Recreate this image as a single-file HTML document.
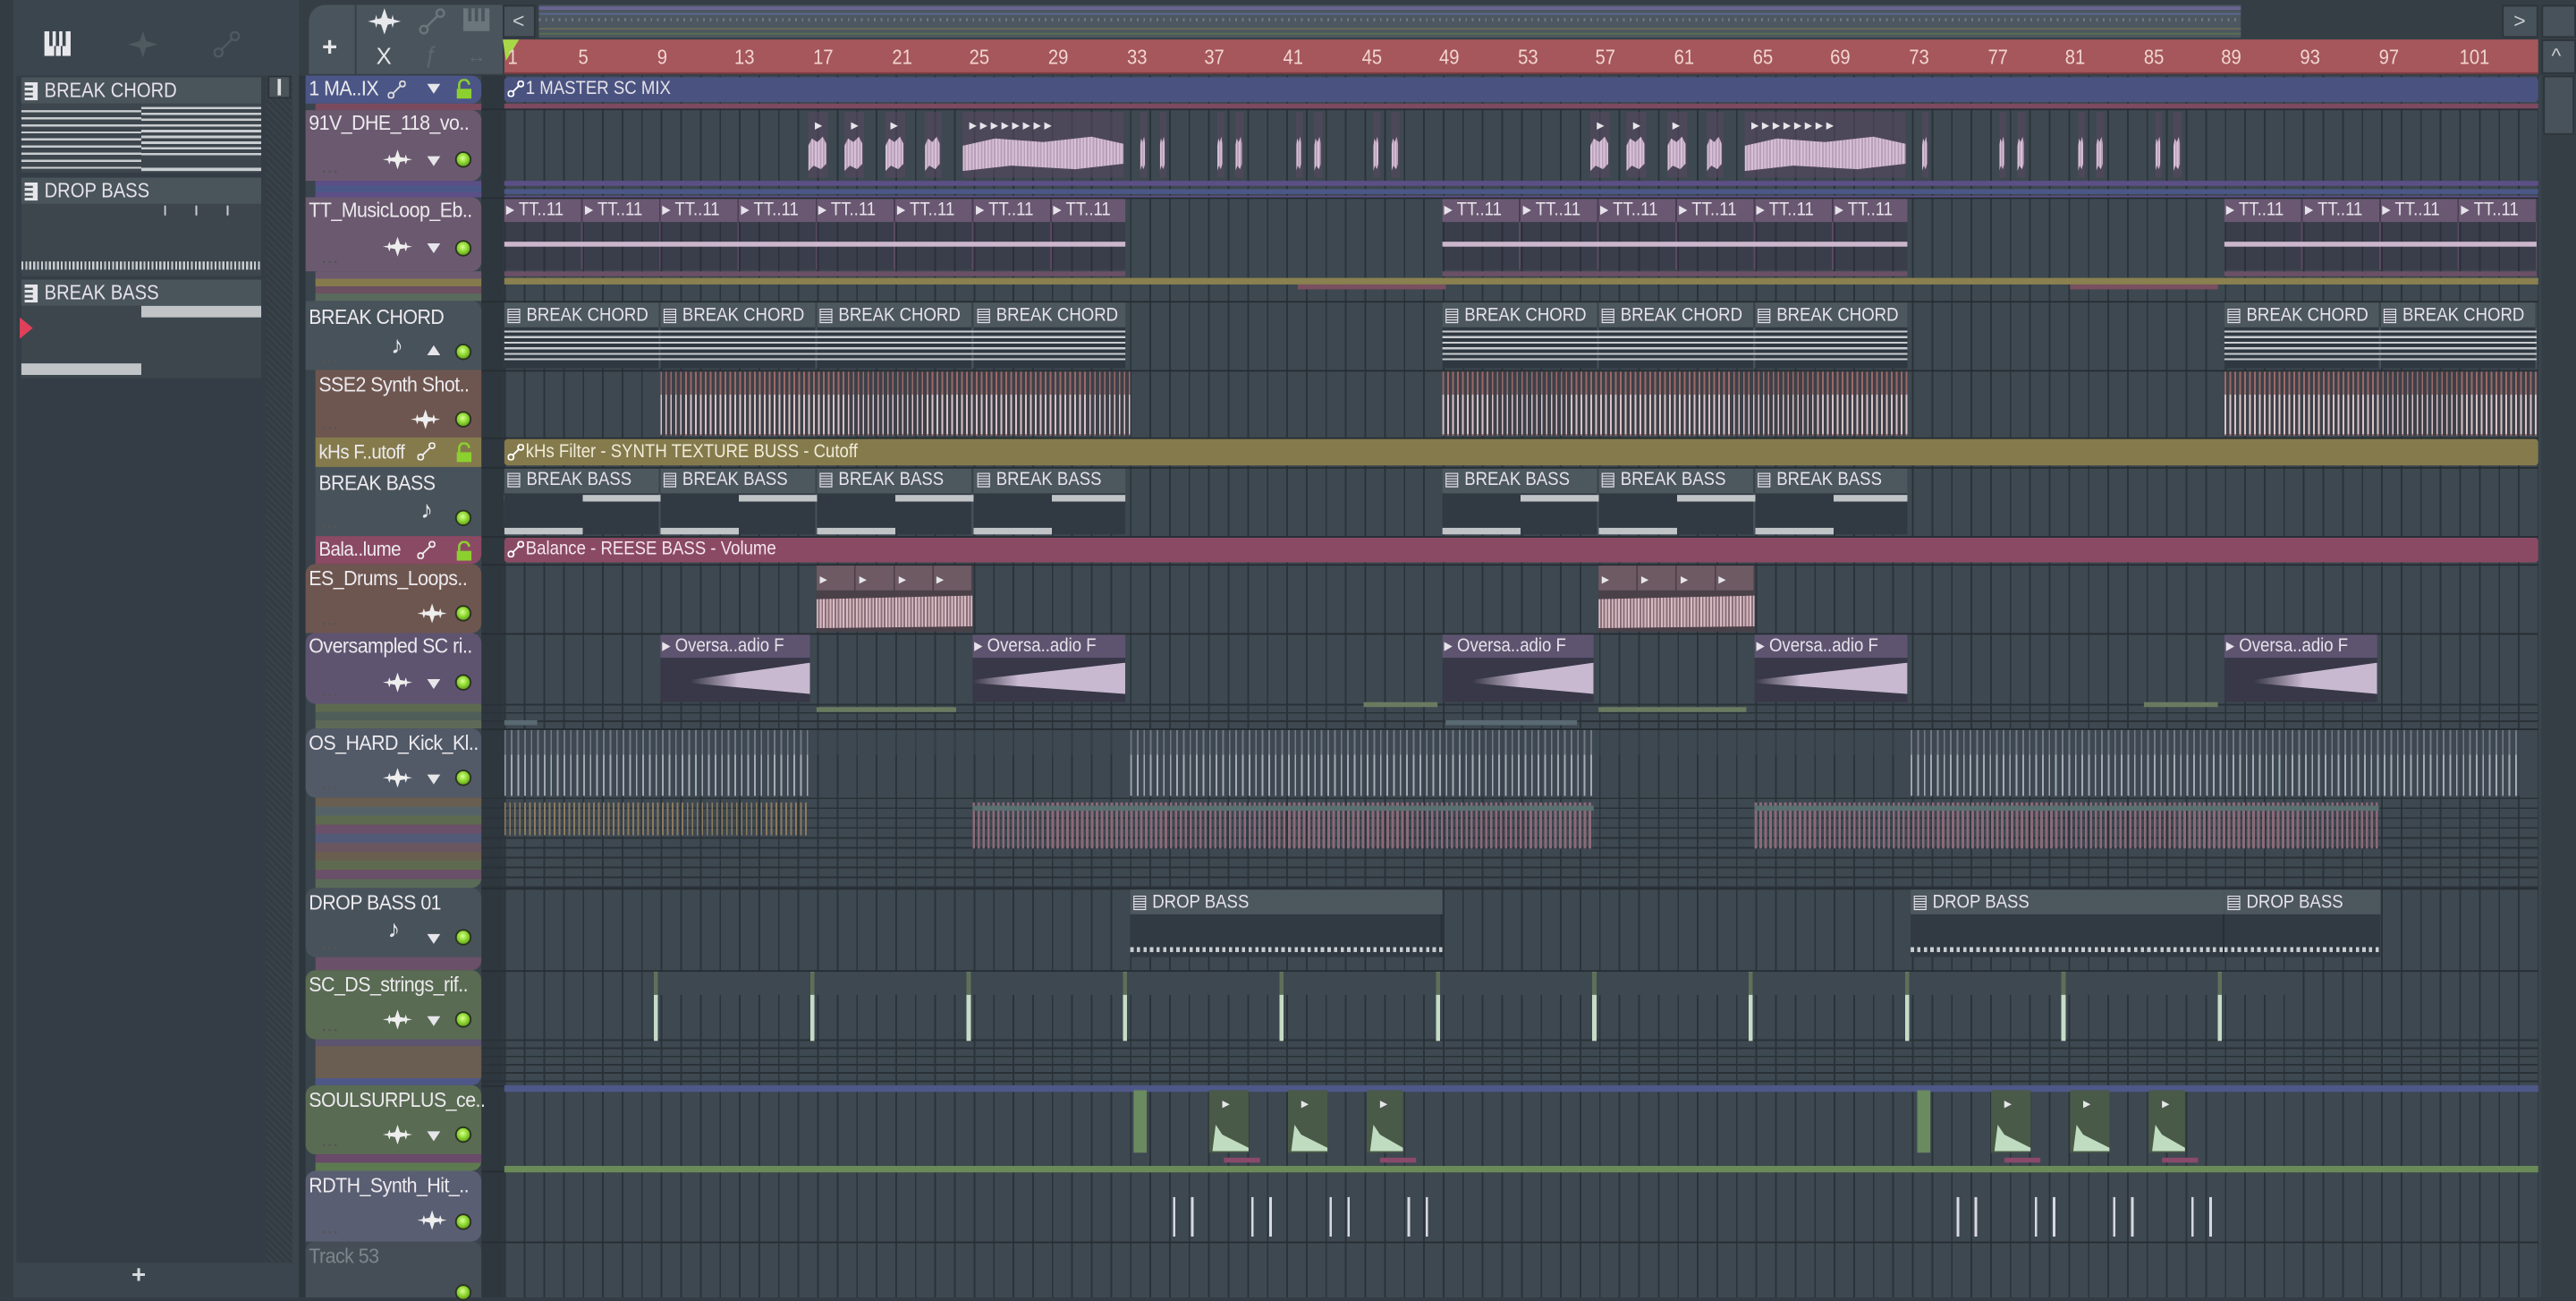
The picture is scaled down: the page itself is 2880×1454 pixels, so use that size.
<!DOCTYPE html>
<html><head><meta charset="utf-8"><style>
*{margin:0;padding:0;box-sizing:border-box}
html,body{width:2880px;height:1450px;overflow:hidden;background:#343d45}
#w{position:absolute;left:0;top:0;width:1568px;height:789px;transform:scale(1.83673,1.83777);transform-origin:0 0;font-family:"Liberation Sans",sans-serif;background:#3a444c}
.a{position:absolute}
.t{position:absolute;white-space:nowrap;color:#e6e6ea;font-size:12.5px;letter-spacing:-0.4px;line-height:14px}
.c{position:absolute;white-space:nowrap;color:#e6e2ea;font-size:11.5px;line-height:14px;transform:scaleX(.88);transform-origin:0 0}
.hd{position:absolute;left:186px;width:107px;border-radius:0 6px 6px 0}
.nm{position:absolute;left:2px;top:1px;white-space:nowrap;color:#eceaee;font-size:12.5px;letter-spacing:-0.3px;transform:scaleX(.93);transform-origin:0 0}
.dots{position:absolute;left:10px;bottom:3px;color:#555;font-size:9px;letter-spacing:1px;font-weight:bold}
.led{position:absolute;left:91px;width:10px;height:10px;border-radius:50%;background:radial-gradient(circle at 45% 40%,#d8ff90 0,#8cd630 45%,#4a7a10 100%);border:1px solid #2a3320}
.tri{position:absolute;left:74px;width:0;height:0;border-left:4px solid transparent;border-right:4px solid transparent;border-top:6px solid #e6e6ea}
.wv{position:absolute;left:47px;width:18px;height:12px}
.band{position:absolute;left:307px;width:1238px}
.vc{position:absolute;top:68px;height:40px;background:rgba(90,72,96,.55)}
.vw{position:absolute;top:82px;height:22px;background:repeating-linear-gradient(90deg,#d8c0d8 0 1px,#b8a0b8 1px 2px);clip-path:polygon(0 30%,20% 10%,50% 20%,80% 5%,100% 25%,100% 80%,70% 95%,30% 85%,0 100%)}
</style></head><body><div id="w">

<!-- LEFT PICKER -->
<div class="a" style="left:0;top:0;width:182px;height:789px;background:#3b454d"></div>
<div class="a" style="left:0;top:0;width:8px;height:789px;background:#333c43"></div>
<svg class="a" style="left:27px;top:19px" width="16" height="15"><rect x="0" y="0" width="16" height="15" fill="#e8e8ec"/><rect x="3" y="0" width="2" height="9" fill="#3b454d"/><rect x="7" y="0" width="2" height="9" fill="#3b454d"/><rect x="11" y="0" width="2" height="9" fill="#3b454d"/><rect x="6" y="9" width="1" height="6" fill="#3b454d"/><rect x="10" y="9" width="1" height="6" fill="#3b454d"/></svg>
<svg class="a" style="left:78px;top:19px" width="18" height="16"><path d="M9 0 L11 6 L18 8 L11 10 L9 16 L7 10 L0 8 L7 6Z" fill="#4f5960"/></svg>
<svg class="a" style="left:130px;top:19px" width="16" height="16"><circle cx="3" cy="13" r="2.5" fill="none" stroke="#4f5960" stroke-width="1.3"/><circle cx="13" cy="3" r="2.5" fill="none" stroke="#4f5960" stroke-width="1.3"/><line x1="5" y1="11" x2="11" y2="5" stroke="#4f5960" stroke-width="1.3"/></svg>
<div class="a" style="left:10px;top:46px;width:168px;height:722px;background:#343d45;border-right:1px solid #2c343a"></div>
<div class="a" style="left:162px;top:46px;width:16px;height:722px;background:repeating-linear-gradient(45deg,#3a434a 0 1px,#343c43 1px 3px)"></div>
<div class="a" style="left:163px;top:46px;width:14px;height:14px;background:#4a545b;border:1px solid #2b3338"></div>
<div class="a" style="left:169px;top:48px;width:2px;height:10px;background:#dcdcdc"></div>
<div class="a" style="left:13px;top:47px;width:146px;height:16px;background:#4a545b"></div>
<svg class="a" style="left:15px;top:50px" width="8" height="11"><rect width="8" height="11" fill="#e6e6ea"/><rect x="0" y="2" width="5" height="1.3" fill="#4a545b"/><rect x="0" y="5" width="5" height="1.3" fill="#4a545b"/><rect x="0" y="8" width="5" height="1.3" fill="#4a545b"/></svg>
<div class="c" style="left:27px;top:48px;font-size:12.5px">BREAK CHORD</div>
<div class="a" style="left:13px;top:63px;width:146px;height:42px;background:#3d464d"></div>
<div class="a" style="left:13px;top:67px;width:73px;height:38px;background:repeating-linear-gradient(180deg,#c9cdd0 0 1.3px,transparent 1.3px 4.3px)"></div>
<div class="a" style="left:86px;top:65px;width:73px;height:30px;background:repeating-linear-gradient(180deg,#c9cdd0 0 1.5px,transparent 1.5px 3.5px)"></div>
<div class="a" style="left:86px;top:102px;width:73px;height:2px;background:#c9cdd0"></div>
<div class="a" style="left:13px;top:108px;width:146px;height:16px;background:#4a545b"></div>
<svg class="a" style="left:15px;top:111px" width="8" height="11"><rect width="8" height="11" fill="#e6e6ea"/><rect x="0" y="2" width="5" height="1.3" fill="#4a545b"/><rect x="0" y="5" width="5" height="1.3" fill="#4a545b"/><rect x="0" y="8" width="5" height="1.3" fill="#4a545b"/></svg>
<div class="c" style="left:27px;top:109px;font-size:12.5px">DROP BASS</div>
<div class="a" style="left:13px;top:124px;width:146px;height:44px;background:#3d464d"></div>
<div class="a" style="left:100px;top:125px;width:56px;height:6px;background:repeating-linear-gradient(90deg,#c9cdd0 0 1px,transparent 1px 19px)"></div>
<div class="a" style="left:13px;top:159px;width:146px;height:5px;background:repeating-linear-gradient(90deg,#c9cdd0 0 1.2px,transparent 1.2px 2.4px)"></div>
<div class="a" style="left:13px;top:170px;width:146px;height:16px;background:#4a545b"></div>
<svg class="a" style="left:15px;top:173px" width="8" height="11"><rect width="8" height="11" fill="#e6e6ea"/><rect x="0" y="2" width="5" height="1.3" fill="#4a545b"/><rect x="0" y="5" width="5" height="1.3" fill="#4a545b"/><rect x="0" y="8" width="5" height="1.3" fill="#4a545b"/></svg>
<div class="c" style="left:27px;top:171px;font-size:12.5px">BREAK BASS</div>
<div class="a" style="left:13px;top:186px;width:146px;height:44px;background:#3d464d"></div>
<div class="a" style="left:86px;top:186px;width:73px;height:7px;background:#c0c4c7"></div>
<div class="a" style="left:13px;top:221px;width:73px;height:7px;background:#c0c4c7"></div>
<svg class="a" style="left:12px;top:193px" width="8" height="13"><path d="M0 0 L8 6.5 L0 13Z" fill="#e0405a"/></svg>
<div class="a" style="left:10px;top:768px;width:168px;height:21px;background:#3b454d"></div>
<div class="t" style="left:80px;top:769px;font-size:15px;font-weight:bold;color:#d8dadc">+</div>

<!-- TOP TOOLBAR -->
<div class="a" style="left:182px;top:0;width:1386px;height:46px;background:#353e45"></div>
<div class="a" style="left:188px;top:3px;width:118px;height:42px;background:#4a545c;border-radius:10px 0 0 0"></div>
<div class="a" style="left:216px;top:3px;width:1px;height:42px;background:#353e45"></div>
<div class="t" style="left:196px;top:23px;font-size:16px;font-weight:bold;color:#e6e6ea">+</div>
<svg class="a" style="left:224px;top:5px" width="20" height="16"><path d="M10 0 L12 6 L20 8 L12 10 L10 16 L8 10 L0 8 L8 6Z M5 4 L6 8 L5 12 L4 8Z M15 4 L16 8 L15 12 L14 8Z" fill="#e8e8ec"/></svg>
<svg class="a" style="left:255px;top:5px" width="16" height="16"><circle cx="3" cy="13" r="2.3" fill="none" stroke="#6b757c" stroke-width="1.3"/><circle cx="13" cy="3" r="2.3" fill="none" stroke="#6b757c" stroke-width="1.3"/><line x1="5" y1="11" x2="11" y2="5" stroke="#6b757c" stroke-width="1.3"/></svg>
<svg class="a" style="left:282px;top:5px" width="16" height="14"><rect width="16" height="14" fill="#6b757c"/><rect x="3" y="0" width="2" height="8" fill="#4a545c"/><rect x="7" y="0" width="2" height="8" fill="#4a545c"/><rect x="11" y="0" width="2" height="8" fill="#4a545c"/></svg>
<div class="t" style="left:229px;top:27px;font-size:14px;color:#e6e6ea">X</div>
<div class="t" style="left:258px;top:26px;font-size:14px;font-style:italic;color:#5c666d">ƒ</div>
<div class="t" style="left:284px;top:27px;font-size:12px;color:#5c666d">↔</div>
<div class="a" style="left:306px;top:3px;width:20px;height:20px;background:#48525a;border:1px solid #2c343a"></div>
<div class="t" style="left:312px;top:6px;color:#c8ccd0">&lt;</div>
<!-- overview -->
<div class="a" style="left:328px;top:3px;width:1036px;height:20px;background:#4c5760"></div>
<div class="a" style="left:328px;top:4px;width:1036px;height:2px;background:#6a6494"></div>
<div class="a" style="left:328px;top:8px;width:1036px;height:1px;background:#5c6890"></div>
<div class="a" style="left:328px;top:11px;width:1036px;height:2px;background:repeating-linear-gradient(90deg,#8a8aa0 0 1px,transparent 1px 4px);opacity:.6"></div>
<div class="a" style="left:328px;top:17px;width:1036px;height:1px;background:#6a6a58"></div>
<div class="a" style="left:328px;top:20px;width:1036px;height:1px;background:#5a7050"></div>
<div class="a" style="left:1523px;top:3px;width:22px;height:20px;background:#48525a;border:1px solid #2c343a"></div>
<div class="t" style="left:1530px;top:6px;color:#c8ccd0">&gt;</div>
<div class="a" style="left:1547px;top:3px;width:21px;height:20px;background:#48525a;border:1px solid #2c343a"></div>

<!-- RULER -->
<div class="a" style="left:307px;top:24px;width:1238px;height:21px;background:#a5575b;border-bottom:1px solid #7a3a40"></div>
<svg class="a" style="left:306px;top:24px" width="10" height="14"><path d="M0 0 L10 0 L2 13Z" fill="#a8d848"/></svg>
<div class="c" style="left:309px;top:28px;color:#f2d4d0;font-size:12.5px">1</div>
<div class="c" style="left:352px;top:28px;color:#f2d4d0;font-size:12.5px">5</div>
<div class="c" style="left:400px;top:28px;color:#f2d4d0;font-size:12.5px">9</div>
<div class="c" style="left:447px;top:28px;color:#f2d4d0;font-size:12.5px">13</div>
<div class="c" style="left:495px;top:28px;color:#f2d4d0;font-size:12.5px">17</div>
<div class="c" style="left:543px;top:28px;color:#f2d4d0;font-size:12.5px">21</div>
<div class="c" style="left:590px;top:28px;color:#f2d4d0;font-size:12.5px">25</div>
<div class="c" style="left:638px;top:28px;color:#f2d4d0;font-size:12.5px">29</div>
<div class="c" style="left:686px;top:28px;color:#f2d4d0;font-size:12.5px">33</div>
<div class="c" style="left:733px;top:28px;color:#f2d4d0;font-size:12.5px">37</div>
<div class="c" style="left:781px;top:28px;color:#f2d4d0;font-size:12.5px">41</div>
<div class="c" style="left:829px;top:28px;color:#f2d4d0;font-size:12.5px">45</div>
<div class="c" style="left:876px;top:28px;color:#f2d4d0;font-size:12.5px">49</div>
<div class="c" style="left:924px;top:28px;color:#f2d4d0;font-size:12.5px">53</div>
<div class="c" style="left:971px;top:28px;color:#f2d4d0;font-size:12.5px">57</div>
<div class="c" style="left:1019px;top:28px;color:#f2d4d0;font-size:12.5px">61</div>
<div class="c" style="left:1067px;top:28px;color:#f2d4d0;font-size:12.5px">65</div>
<div class="c" style="left:1114px;top:28px;color:#f2d4d0;font-size:12.5px">69</div>
<div class="c" style="left:1162px;top:28px;color:#f2d4d0;font-size:12.5px">73</div>
<div class="c" style="left:1210px;top:28px;color:#f2d4d0;font-size:12.5px">77</div>
<div class="c" style="left:1257px;top:28px;color:#f2d4d0;font-size:12.5px">81</div>
<div class="c" style="left:1305px;top:28px;color:#f2d4d0;font-size:12.5px">85</div>
<div class="c" style="left:1352px;top:28px;color:#f2d4d0;font-size:12.5px">89</div>
<div class="c" style="left:1400px;top:28px;color:#f2d4d0;font-size:12.5px">93</div>
<div class="c" style="left:1448px;top:28px;color:#f2d4d0;font-size:12.5px">97</div>
<div class="c" style="left:1497px;top:28px;color:#f2d4d0;font-size:12.5px">101</div>
<!-- right scrollbar -->
<div class="a" style="left:1547px;top:24px;width:21px;height:765px;background:#353e45"></div>
<div class="a" style="left:1547px;top:24px;width:21px;height:21px;background:#48525a;border:1px solid #2c343a"></div>
<div class="t" style="left:1553px;top:27px;color:#c8ccd0">^</div>
<div class="a" style="left:1548px;top:46px;width:19px;height:36px;background:#48525a;border:1px solid #2c343a"></div>

<!-- GRID -->
<div class="a" style="left:293px;top:46px;width:14px;height:743px;background:#2f373e"></div>
<div class="a" style="left:307px;top:46px;width:1238px;height:743px;background-color:#3e4851;background-image:repeating-linear-gradient(90deg,#2b333a 0 1px,transparent 1px 11.9px)"></div>
<div class="a" style="left:293px;top:0;width:1252px;height:789px;background:
linear-gradient(#262d33,#262d33) 0 66px/100% 1px no-repeat,
linear-gradient(#262d33,#262d33) 0 120px/100% 1px no-repeat,
linear-gradient(#262d33,#262d33) 0 183px/100% 1px no-repeat,
linear-gradient(#262d33,#262d33) 0 225px/100% 1px no-repeat,
linear-gradient(#262d33,#262d33) 0 266px/100% 1px no-repeat,
linear-gradient(#262d33,#262d33) 0 284px/100% 1px no-repeat,
linear-gradient(#262d33,#262d33) 0 326px/100% 1px no-repeat,
linear-gradient(#262d33,#262d33) 0 343px/100% 1px no-repeat,
linear-gradient(#262d33,#262d33) 0 385px/100% 1px no-repeat,
linear-gradient(#262d33,#262d33) 0 443px/100% 1px no-repeat,
linear-gradient(#262d33,#262d33) 0 540px/100% 1px no-repeat,
linear-gradient(#262d33,#262d33) 0 590px/100% 1px no-repeat,
linear-gradient(#262d33,#262d33) 0 660px/100% 1px no-repeat,
linear-gradient(#262d33,#262d33) 0 712px/100% 1px no-repeat,
linear-gradient(#262d33,#262d33) 0 755px/100% 1px no-repeat"></div>
<div class="a" style="left:293px;top:485px;width:1252px;height:55px;background:repeating-linear-gradient(180deg,#2a3238 0 1px,transparent 1px 6px)"></div>
<div class="a" style="left:293px;top:632px;width:1252px;height:28px;background:repeating-linear-gradient(180deg,#2a3238 0 1px,transparent 1px 5px)"></div>
<div class="a" style="left:293px;top:428px;width:1252px;height:15px;background:repeating-linear-gradient(180deg,#2a3238 0 1px,transparent 1px 5px)"></div>

<!-- automation / bands -->
<div class="band" style="top:47px;height:15px;background:#4a5380;border-radius:2px"></div>
<svg class="a" style="left:309px;top:49px" width="10" height="10"><circle cx="2" cy="8" r="1.7" fill="none" stroke="#fff" stroke-width="1"/><circle cx="8" cy="2" r="1.7" fill="none" stroke="#fff" stroke-width="1"/><line x1="3.2" y1="6.8" x2="6.8" y2="3.2" stroke="#fff"/></svg>
<div class="c" style="left:320px;top:47px">1 MASTER SC MIX</div>
<div class="band" style="top:63px;height:3px;background:#7d4a60"></div>
<div class="band" style="top:110px;height:3px;background:#5c4f86"></div>
<div class="band" style="top:115px;height:3px;background:#4b5887"></div>
<div class="band" style="top:119px;height:1px;background:#5c4f86"></div>
<div class="band" style="top:169px;height:4px;background:#8a8050"></div>
<div class="a" style="left:307px;top:165px;width:378px;height:3px;background:#6a5066"></div>
<div class="a" style="left:878px;top:165px;width:283px;height:3px;background:#6a5066"></div>
<div class="a" style="left:1354px;top:165px;width:190px;height:3px;background:#6a5066"></div>
<div class="a" style="left:790px;top:173px;width:90px;height:3px;background:#7a5060"></div>
<div class="a" style="left:1260px;top:173px;width:90px;height:3px;background:#7a5060"></div>
<div class="band" style="top:267px;height:16px;background:#857a4c;border-radius:2px"></div>
<svg class="a" style="left:309px;top:270px" width="10" height="10"><circle cx="2" cy="8" r="1.7" fill="none" stroke="#fff" stroke-width="1"/><circle cx="8" cy="2" r="1.7" fill="none" stroke="#fff" stroke-width="1"/><line x1="3.2" y1="6.8" x2="6.8" y2="3.2" stroke="#fff"/></svg>
<div class="c" style="left:320px;top:268px;color:#f0ecd8">kHs Filter - SYNTH TEXTURE BUSS - Cutoff</div>
<div class="band" style="top:327px;height:15px;background:#8b4a64;border-radius:2px"></div>
<svg class="a" style="left:309px;top:329px" width="10" height="10"><circle cx="2" cy="8" r="1.7" fill="none" stroke="#fff" stroke-width="1"/><circle cx="8" cy="2" r="1.7" fill="none" stroke="#fff" stroke-width="1"/><line x1="3.2" y1="6.8" x2="6.8" y2="3.2" stroke="#fff"/></svg>
<div class="c" style="left:320px;top:327px;color:#f4e6ec">Balance - REESE BASS - Volume</div>
<div class="band" style="top:660px;height:4px;background:#4e5888"></div>
<div class="band" style="top:709px;height:4px;background:#6a8a58"></div>

<!-- 91V vocal clips -->
<div class="vc" style="left:492px;width:12px"></div><div class="vw" style="left:492px;width:11px"></div>
<div class="vc" style="left:514px;width:12px"></div><div class="vw" style="left:514px;width:11px"></div>
<div class="vc" style="left:539px;width:12px"></div><div class="vw" style="left:539px;width:11px"></div>
<div class="vc" style="left:563px;width:10px"></div><div class="vw" style="left:563px;width:9px"></div>
<div class="vc" style="left:586px;width:98px"></div><div class="vw" style="left:586px;width:98px"></div>
<div class="vc" style="left:694px;width:4px"></div><div class="vw" style="left:694px;width:3px"></div>
<div class="vc" style="left:706px;width:4px"></div><div class="vw" style="left:706px;width:3px"></div>
<div class="vc" style="left:741px;width:4px"></div><div class="vw" style="left:741px;width:3px"></div>
<div class="vc" style="left:752px;width:5px"></div><div class="vw" style="left:752px;width:4px"></div>
<div class="vc" style="left:789px;width:4px"></div><div class="vw" style="left:789px;width:3px"></div>
<div class="vc" style="left:800px;width:5px"></div><div class="vw" style="left:800px;width:4px"></div>
<div class="vc" style="left:836px;width:4px"></div><div class="vw" style="left:836px;width:3px"></div>
<div class="vc" style="left:847px;width:5px"></div><div class="vw" style="left:847px;width:4px"></div>
<div class="vc" style="left:968px;width:12px"></div><div class="vw" style="left:968px;width:11px"></div>
<div class="vc" style="left:990px;width:12px"></div><div class="vw" style="left:990px;width:11px"></div>
<div class="vc" style="left:1015px;width:12px"></div><div class="vw" style="left:1015px;width:11px"></div>
<div class="vc" style="left:1039px;width:10px"></div><div class="vw" style="left:1039px;width:9px"></div>
<div class="vc" style="left:1062px;width:98px"></div><div class="vw" style="left:1062px;width:98px"></div>
<div class="vc" style="left:1170px;width:4px"></div><div class="vw" style="left:1170px;width:3px"></div>
<div class="vc" style="left:1217px;width:4px"></div><div class="vw" style="left:1217px;width:3px"></div>
<div class="vc" style="left:1228px;width:5px"></div><div class="vw" style="left:1228px;width:4px"></div>
<div class="vc" style="left:1265px;width:4px"></div><div class="vw" style="left:1265px;width:3px"></div>
<div class="vc" style="left:1276px;width:5px"></div><div class="vw" style="left:1276px;width:4px"></div>
<div class="vc" style="left:1312px;width:4px"></div><div class="vw" style="left:1312px;width:3px"></div>
<div class="vc" style="left:1323px;width:5px"></div><div class="vw" style="left:1323px;width:4px"></div>
<div class="t" style="left:496px;top:69px;font-size:9px">▸</div><div class="t" style="left:518px;top:69px;font-size:9px">▸</div><div class="t" style="left:542px;top:69px;font-size:9px">▸</div>
<div class="t" style="left:590px;top:69px;font-size:9px;letter-spacing:2px">▸▸▸▸▸▸▸▸</div>
<div class="t" style="left:972px;top:69px;font-size:9px">▸</div><div class="t" style="left:994px;top:69px;font-size:9px">▸</div><div class="t" style="left:1018px;top:69px;font-size:9px">▸</div>
<div class="t" style="left:1066px;top:69px;font-size:9px;letter-spacing:2px">▸▸▸▸▸▸▸▸</div>

<!-- TT clips -->
<div class="a" style="left:307px;top:121px;width:378px;height:43px;background:repeating-linear-gradient(90deg,rgba(50,40,60,.35) 0 46.6px,#5a4a62 46.6px 47.6px)"></div>
<div class="a" style="left:307px;top:121px;width:378px;height:14px;background:repeating-linear-gradient(90deg,#6a5872 0 46.6px,#4a3e52 46.6px 47.6px)"></div>
<div class="a" style="left:307px;top:147px;width:378px;height:3px;background:#cbb6cc"></div>
<div class="a" style="left:878px;top:121px;width:283px;height:43px;background:repeating-linear-gradient(90deg,rgba(50,40,60,.35) 0 46.6px,#5a4a62 46.6px 47.6px)"></div>
<div class="a" style="left:878px;top:121px;width:283px;height:14px;background:repeating-linear-gradient(90deg,#6a5872 0 46.6px,#4a3e52 46.6px 47.6px)"></div>
<div class="a" style="left:878px;top:147px;width:283px;height:3px;background:#cbb6cc"></div>
<div class="a" style="left:1354px;top:121px;width:190px;height:43px;background:repeating-linear-gradient(90deg,rgba(50,40,60,.35) 0 46.6px,#5a4a62 46.6px 47.6px)"></div>
<div class="a" style="left:1354px;top:121px;width:190px;height:14px;background:repeating-linear-gradient(90deg,#6a5872 0 46.6px,#4a3e52 46.6px 47.6px)"></div>
<div class="a" style="left:1354px;top:147px;width:190px;height:3px;background:#cbb6cc"></div>
<div class="c" style="left:308px;top:121px">▸ TT..11</div><div class="c" style="left:356px;top:121px">▸ TT..11</div><div class="c" style="left:403px;top:121px">▸ TT..11</div><div class="c" style="left:451px;top:121px">▸ TT..11</div><div class="c" style="left:498px;top:121px">▸ TT..11</div><div class="c" style="left:546px;top:121px">▸ TT..11</div><div class="c" style="left:594px;top:121px">▸ TT..11</div><div class="c" style="left:641px;top:121px">▸ TT..11</div>
<div class="c" style="left:879px;top:121px">▸ TT..11</div><div class="c" style="left:927px;top:121px">▸ TT..11</div><div class="c" style="left:974px;top:121px">▸ TT..11</div><div class="c" style="left:1022px;top:121px">▸ TT..11</div><div class="c" style="left:1069px;top:121px">▸ TT..11</div><div class="c" style="left:1117px;top:121px">▸ TT..11</div>
<div class="c" style="left:1355px;top:121px">▸ TT..11</div><div class="c" style="left:1403px;top:121px">▸ TT..11</div><div class="c" style="left:1450px;top:121px">▸ TT..11</div><div class="c" style="left:1498px;top:121px">▸ TT..11</div>

<!-- BREAK CHORD clips -->
<div class="a" style="left:307px;top:184px;width:378px;height:40px;background:repeating-linear-gradient(90deg,#2f3840 0 94px,#465058 94px 95.2px)"></div>
<div class="a" style="left:307px;top:184px;width:378px;height:15px;background:repeating-linear-gradient(90deg,#4d575e 0 94px,#3a434a 94px 95.2px)"></div>
<div class="a" style="left:307px;top:201px;width:378px;height:18px;background:repeating-linear-gradient(180deg,#c8ccd0 0 1.2px,transparent 1.2px 3.4px)"></div>
<div class="a" style="left:878px;top:184px;width:283px;height:40px;background:repeating-linear-gradient(90deg,#2f3840 0 94px,#465058 94px 95.2px)"></div>
<div class="a" style="left:878px;top:184px;width:283px;height:15px;background:repeating-linear-gradient(90deg,#4d575e 0 94px,#3a434a 94px 95.2px)"></div>
<div class="a" style="left:878px;top:201px;width:283px;height:18px;background:repeating-linear-gradient(180deg,#c8ccd0 0 1.2px,transparent 1.2px 3.4px)"></div>
<div class="a" style="left:1354px;top:184px;width:190px;height:40px;background:repeating-linear-gradient(90deg,#2f3840 0 94px,#465058 94px 95.2px)"></div>
<div class="a" style="left:1354px;top:184px;width:190px;height:15px;background:repeating-linear-gradient(90deg,#4d575e 0 94px,#3a434a 94px 95.2px)"></div>
<div class="a" style="left:1354px;top:201px;width:190px;height:18px;background:repeating-linear-gradient(180deg,#c8ccd0 0 1.2px,transparent 1.2px 3.4px)"></div>
<div class="c" style="left:308px;top:185px">▤ BREAK CHORD</div><div class="c" style="left:403px;top:185px">▤ BREAK CHORD</div><div class="c" style="left:498px;top:185px">▤ BREAK CHORD</div><div class="c" style="left:594px;top:185px">▤ BREAK CHORD</div>
<div class="c" style="left:879px;top:185px">▤ BREAK CHORD</div><div class="c" style="left:974px;top:185px">▤ BREAK CHORD</div><div class="c" style="left:1069px;top:185px">▤ BREAK CHORD</div>
<div class="c" style="left:1355px;top:185px">▤ BREAK CHORD</div><div class="c" style="left:1450px;top:185px">▤ BREAK CHORD</div>

<!-- SSE2 -->
<div class="a" style="left:402px;top:226px;width:286px;height:39px;background:repeating-linear-gradient(90deg,#9a6a68 0 1px,#3e4048 1px 3px)"></div>
<div class="a" style="left:402px;top:240px;width:286px;height:24px;background:repeating-linear-gradient(90deg,#d8c4c8 0 1px,transparent 1px 3px)"></div>
<div class="a" style="left:878px;top:226px;width:283px;height:39px;background:repeating-linear-gradient(90deg,#9a6a68 0 1px,#3e4048 1px 3px)"></div>
<div class="a" style="left:878px;top:240px;width:283px;height:24px;background:repeating-linear-gradient(90deg,#d8c4c8 0 1px,transparent 1px 3px)"></div>
<div class="a" style="left:1354px;top:226px;width:190px;height:39px;background:repeating-linear-gradient(90deg,#9a6a68 0 1px,#3e4048 1px 3px)"></div>
<div class="a" style="left:1354px;top:240px;width:190px;height:24px;background:repeating-linear-gradient(90deg,#d8c4c8 0 1px,transparent 1px 3px)"></div>

<!-- BREAK BASS -->
<div class="a" style="left:307px;top:285px;width:378px;height:40px;background:repeating-linear-gradient(90deg,#313a42 0 94px,#465058 94px 95.2px)"></div>
<div class="a" style="left:307px;top:285px;width:378px;height:15px;background:repeating-linear-gradient(90deg,#4d575e 0 94px,#3a434a 94px 95.2px)"></div>
<div class="a" style="left:307px;top:301px;width:378px;height:4px;background:repeating-linear-gradient(90deg,transparent 0 47.6px,#c0c4c7 47.6px 95.2px)"></div>
<div class="a" style="left:307px;top:321px;width:378px;height:4px;background:repeating-linear-gradient(90deg,#c0c4c7 0 47.6px,transparent 47.6px 95.2px)"></div>
<div class="a" style="left:878px;top:285px;width:283px;height:40px;background:repeating-linear-gradient(90deg,#313a42 0 94px,#465058 94px 95.2px)"></div>
<div class="a" style="left:878px;top:285px;width:283px;height:15px;background:repeating-linear-gradient(90deg,#4d575e 0 94px,#3a434a 94px 95.2px)"></div>
<div class="a" style="left:878px;top:301px;width:283px;height:4px;background:repeating-linear-gradient(90deg,transparent 0 47.6px,#c0c4c7 47.6px 95.2px)"></div>
<div class="a" style="left:878px;top:321px;width:283px;height:4px;background:repeating-linear-gradient(90deg,#c0c4c7 0 47.6px,transparent 47.6px 95.2px)"></div>
<div class="c" style="left:308px;top:285px">▤ BREAK BASS</div><div class="c" style="left:403px;top:285px">▤ BREAK BASS</div><div class="c" style="left:498px;top:285px">▤ BREAK BASS</div><div class="c" style="left:594px;top:285px">▤ BREAK BASS</div>
<div class="c" style="left:879px;top:285px">▤ BREAK BASS</div><div class="c" style="left:974px;top:285px">▤ BREAK BASS</div><div class="c" style="left:1069px;top:285px">▤ BREAK BASS</div>

<!-- ES Drums -->
<div class="a" style="left:497px;top:344px;width:95px;height:40px;background:#4a4048"></div>
<div class="a" style="left:497px;top:344px;width:95px;height:15px;background:repeating-linear-gradient(90deg,#6e5a62 0 23px,#4a3e46 23px 23.8px)"></div>
<div class="a" style="left:497px;top:360px;width:95px;height:22px;background:repeating-linear-gradient(90deg,#d8bcc4 0 1px,#8a6e78 1px 2px);clip-path:polygon(0 20%,100% 10%,100% 95%,0 100%)"></div>
<div class="a" style="left:973px;top:344px;width:95px;height:40px;background:#4a4048"></div>
<div class="a" style="left:973px;top:344px;width:95px;height:15px;background:repeating-linear-gradient(90deg,#6e5a62 0 23px,#4a3e46 23px 23.8px)"></div>
<div class="a" style="left:973px;top:360px;width:95px;height:22px;background:repeating-linear-gradient(90deg,#d8bcc4 0 1px,#8a6e78 1px 2px);clip-path:polygon(0 20%,100% 10%,100% 95%,0 100%)"></div>
<div class="t" style="left:499px;top:345px;font-size:9px">▸</div><div class="t" style="left:523px;top:345px;font-size:9px">▸</div><div class="t" style="left:547px;top:345px;font-size:9px">▸</div><div class="t" style="left:570px;top:345px;font-size:9px">▸</div>
<div class="t" style="left:975px;top:345px;font-size:9px">▸</div><div class="t" style="left:999px;top:345px;font-size:9px">▸</div><div class="t" style="left:1023px;top:345px;font-size:9px">▸</div><div class="t" style="left:1046px;top:345px;font-size:9px">▸</div>

<!-- Oversampled -->
<div class="a" style="left:402px;top:386px;width:91px;height:41px;background:#383848"></div><div class="a" style="left:402px;top:386px;width:91px;height:14px;background:#5e5470"></div><div class="a" style="left:420px;top:403px;width:73px;height:19px;background:linear-gradient(90deg,transparent,#c8b8d0 40%);clip-path:polygon(0 55%,100% 0,100% 100%,0 65%)"></div><div class="c" style="left:403px;top:386px">▸ Oversa..adio F</div>
<div class="a" style="left:592px;top:386px;width:93px;height:41px;background:#383848"></div><div class="a" style="left:592px;top:386px;width:93px;height:14px;background:#5e5470"></div><div class="a" style="left:592px;top:403px;width:93px;height:19px;background:linear-gradient(90deg,transparent,#c8b8d0 30%);clip-path:polygon(0 55%,100% 0,100% 100%,0 65%)"></div><div class="c" style="left:593px;top:386px">▸ Oversa..adio F</div>
<div class="a" style="left:878px;top:386px;width:92px;height:41px;background:#383848"></div><div class="a" style="left:878px;top:386px;width:92px;height:14px;background:#5e5470"></div><div class="a" style="left:896px;top:403px;width:74px;height:19px;background:linear-gradient(90deg,transparent,#c8b8d0 40%);clip-path:polygon(0 55%,100% 0,100% 100%,0 65%)"></div><div class="c" style="left:879px;top:386px">▸ Oversa..adio F</div>
<div class="a" style="left:1068px;top:386px;width:93px;height:41px;background:#383848"></div><div class="a" style="left:1068px;top:386px;width:93px;height:14px;background:#5e5470"></div><div class="a" style="left:1068px;top:403px;width:93px;height:19px;background:linear-gradient(90deg,transparent,#c8b8d0 30%);clip-path:polygon(0 55%,100% 0,100% 100%,0 65%)"></div><div class="c" style="left:1069px;top:386px">▸ Oversa..adio F</div>
<div class="a" style="left:1354px;top:386px;width:93px;height:41px;background:#383848"></div><div class="a" style="left:1354px;top:386px;width:93px;height:14px;background:#5e5470"></div><div class="a" style="left:1372px;top:403px;width:75px;height:19px;background:linear-gradient(90deg,transparent,#c8b8d0 40%);clip-path:polygon(0 55%,100% 0,100% 100%,0 65%)"></div><div class="c" style="left:1355px;top:386px">▸ Oversa..adio F</div>
<div class="a" style="left:497px;top:430px;width:85px;height:3px;background:#6a7a60"></div>
<div class="a" style="left:830px;top:427px;width:45px;height:3px;background:#6a7a60"></div>
<div class="a" style="left:973px;top:430px;width:90px;height:3px;background:#6a7a60"></div>
<div class="a" style="left:1305px;top:427px;width:45px;height:3px;background:#6a7a60"></div>
<div class="a" style="left:307px;top:438px;width:20px;height:3px;background:#5a6a72"></div>
<div class="a" style="left:880px;top:438px;width:80px;height:3px;background:#5a6a72"></div>

<!-- OS HARD kick -->
<div class="a" style="left:307px;top:444px;width:186px;height:40px;background:repeating-linear-gradient(90deg,#c8ccd4 0 1px,#3e4852 1px 4px);opacity:.75"></div>
<div class="a" style="left:688px;top:444px;width:282px;height:40px;background:repeating-linear-gradient(90deg,#c8ccd4 0 1px,#3e4852 1px 4px);opacity:.75"></div>
<div class="a" style="left:1163px;top:444px;width:372px;height:40px;background:repeating-linear-gradient(90deg,#c8ccd4 0 1px,#3e4852 1px 4px);opacity:.75"></div>
<div class="a" style="left:307px;top:444px;width:1228px;height:15px;background:#3e4852;opacity:.5"></div>
<div class="a" style="left:307px;top:488px;width:186px;height:20px;background:repeating-linear-gradient(90deg,#8a7a60 0 1px,transparent 1px 3px)"></div>
<div class="a" style="left:592px;top:488px;width:378px;height:28px;background:repeating-linear-gradient(90deg,#8a6a78 0 1.5px,transparent 1.5px 3px)"></div>
<div class="a" style="left:1068px;top:488px;width:380px;height:28px;background:repeating-linear-gradient(90deg,#8a6a78 0 1.5px,transparent 1.5px 3px)"></div>
<div class="a" style="left:592px;top:490px;width:378px;height:3px;background:#5a7070"></div>
<div class="a" style="left:1068px;top:490px;width:380px;height:3px;background:#5a7070"></div>

<!-- DROP BASS -->
<div class="a" style="left:688px;top:541px;width:190px;height:41px;background:#313a42;border-right:1px solid #262d33"></div>
<div class="a" style="left:688px;top:541px;width:190px;height:15px;background:#4d575e"></div>
<div class="a" style="left:688px;top:576px;width:190px;height:3px;background:repeating-linear-gradient(90deg,#c8ccd0 0 2px,transparent 2px 4px)"></div>
<div class="c" style="left:689px;top:542px">▤ DROP BASS</div>
<div class="a" style="left:1163px;top:541px;width:191px;height:41px;background:#313a42;border-right:1px solid #262d33"></div>
<div class="a" style="left:1163px;top:541px;width:191px;height:15px;background:#4d575e"></div>
<div class="a" style="left:1163px;top:576px;width:191px;height:3px;background:repeating-linear-gradient(90deg,#c8ccd0 0 2px,transparent 2px 4px)"></div>
<div class="c" style="left:1164px;top:542px">▤ DROP BASS</div>
<div class="a" style="left:1354px;top:541px;width:95px;height:41px;background:#313a42"></div>
<div class="a" style="left:1354px;top:541px;width:95px;height:15px;background:#4d575e"></div>
<div class="a" style="left:1354px;top:576px;width:95px;height:3px;background:repeating-linear-gradient(90deg,#c8ccd0 0 2px,transparent 2px 4px)"></div>
<div class="c" style="left:1355px;top:542px">▤ DROP BASS</div>

<!-- SC_DS strings markers -->
<div class="a" style="left:398px;top:591px;width:1000px;height:42px;background:repeating-linear-gradient(90deg,#c6dcc6 0 2.5px,transparent 2.5px 95.2px)"></div>
<div class="a" style="left:398px;top:591px;width:1000px;height:14px;background:repeating-linear-gradient(90deg,#5e7058 0 2.5px,#3e4851 2.5px 95.2px)"></div>

<!-- SOULSURPLUS -->
<div class="a" style="left:690px;top:663px;width:8px;height:38px;background:#6a8a60"></div>
<div class="a" style="left:736px;top:663px;width:24px;height:38px;background:#4a5a48"></div>
<div class="a" style="left:784px;top:663px;width:24px;height:38px;background:#4a5a48"></div>
<div class="a" style="left:832px;top:663px;width:22px;height:38px;background:#4a5a48"></div>
<div class="a" style="left:1167px;top:663px;width:8px;height:38px;background:#6a8a60"></div>
<div class="a" style="left:1212px;top:663px;width:24px;height:38px;background:#4a5a48"></div>
<div class="a" style="left:1260px;top:663px;width:24px;height:38px;background:#4a5a48"></div>
<div class="a" style="left:1308px;top:663px;width:22px;height:38px;background:#4a5a48"></div>
<div class="t" style="left:744px;top:664px;font-size:9px">▸</div><div class="t" style="left:792px;top:664px;font-size:9px">▸</div><div class="t" style="left:840px;top:664px;font-size:9px">▸</div>
<div class="t" style="left:1220px;top:664px;font-size:9px">▸</div><div class="t" style="left:1268px;top:664px;font-size:9px">▸</div><div class="t" style="left:1316px;top:664px;font-size:9px">▸</div>
<svg class="a" style="left:736px;top:680px" width="600" height="20"><g fill="#c0dcc0"><path d="M2 20 L4 4 L8 10 L24 18 L24 20Z"/><path d="M50 20 L52 4 L56 10 L72 18 L72 20Z"/><path d="M98 20 L100 4 L104 10 L118 18 L118 20Z"/><path d="M478 20 L480 4 L484 10 L500 18 L500 20Z"/><path d="M526 20 L528 4 L532 10 L548 18 L548 20Z"/><path d="M574 20 L576 4 L580 10 L594 18 L594 20Z"/></g></svg>
<div class="a" style="left:745px;top:704px;width:22px;height:3px;background:#8a4a6a"></div>
<div class="a" style="left:840px;top:704px;width:22px;height:3px;background:#8a4a6a"></div>
<div class="a" style="left:1220px;top:704px;width:22px;height:3px;background:#8a4a6a"></div>
<div class="a" style="left:1316px;top:704px;width:22px;height:3px;background:#8a4a6a"></div>

<!-- RDTH -->
<div class="a" style="left:714px;top:728px;width:160px;height:24px;background:repeating-linear-gradient(90deg,#d8d8e0 0 1.5px,transparent 1.5px 11px,#d8d8e0 11px 12.5px,transparent 12.5px 47.6px)"></div>
<div class="a" style="left:1191px;top:728px;width:160px;height:24px;background:repeating-linear-gradient(90deg,#d8d8e0 0 1.5px,transparent 1.5px 11px,#d8d8e0 11px 12.5px,transparent 12.5px 47.6px)"></div>

<!-- TRACK HEADERS -->
<div class="a" style="left:182px;top:46px;width:4px;height:743px;background:#2e363d"></div>
<div class="hd" style="top:46px;height:17px;background:#4b5687"><div class="nm">1 MA..IX</div>
<svg class="a" style="left:50px;top:3px" width="11" height="11"><circle cx="2" cy="9" r="1.7" fill="none" stroke="#ddd"/><circle cx="9" cy="2" r="1.7" fill="none" stroke="#ddd"/><line x1="3.2" y1="7.8" x2="7.8" y2="3.2" stroke="#ddd"/></svg><div class="tri" style="top:5px"></div>
<svg class="a" style="left:92px;top:2px" width="9" height="12"><path d="M1.5 6 V3.5 A3 3 0 0 1 7.5 3.5" fill="none" stroke="#8cd030" stroke-width="1.4"/><rect x="0" y="6" width="9" height="6" fill="#8cd030"/></svg></div>
<div class="a" style="left:192px;top:63px;width:101px;height:4px;background:#7a4a5e"></div>

<div class="hd" style="top:67px;height:43px;background:#6b5a6f"><div class="nm">91V_DHE_118_vo..</div><div class="dots">...</div>
<svg class="wv" style="top:24px" viewBox="0 0 18 12"><path d="M9 0 L10.5 4.5 L18 6 L10.5 7.5 L9 12 L7.5 7.5 L0 6 L7.5 4.5Z M4 3 L5 6 L4 9 L3 6Z M14 3 L15 6 L14 9 L13 6Z" fill="#eee"/></svg><div class="tri" style="top:28px"></div><div class="led" style="top:25px"></div></div>
<div class="a" style="left:192px;top:110px;width:101px;height:10px;background:linear-gradient(#5c4f86 0 30%,#4b5887 30% 70%,#5c4f86 70%)"></div>

<div class="hd" style="top:120px;height:45px;background:#6b5a6f"><div class="nm">TT_MusicLoop_Eb..</div><div class="dots">...</div>
<svg class="wv" style="top:24px" viewBox="0 0 18 12"><path d="M9 0 L10.5 4.5 L18 6 L10.5 7.5 L9 12 L7.5 7.5 L0 6 L7.5 4.5Z M4 3 L5 6 L4 9 L3 6Z M14 3 L15 6 L14 9 L13 6Z" fill="#eee"/></svg><div class="tri" style="top:28px"></div><div class="led" style="top:26px"></div></div>
<div class="a" style="left:192px;top:165px;width:101px;height:18px;background:linear-gradient(#6b5a6f 0 25%,#847a4c 25% 50%,#6a5060 50% 75%,#5a6a5c 75%)"></div>

<div class="hd" style="top:183px;height:42px;background:#48525a;border-radius:0 6px 0 0"><div class="nm" style="top:3px">BREAK CHORD</div><div class="dots">...</div>
<div class="t" style="left:52px;top:21px;font-size:15px">♪</div><div class="tri" style="top:27px;border-top:none;border-bottom:6px solid #e6e6ea"></div><div class="led" style="top:26px"></div></div>

<div class="hd" style="top:225px;height:41px;left:192px;width:101px;background:#6e5650;border-radius:0"><div class="nm" style="top:2px">SSE2 Synth Shot..</div><div class="dots" style="left:4px">...</div>
<svg class="wv" style="top:24px;left:58px" viewBox="0 0 18 12"><path d="M9 0 L10.5 4.5 L18 6 L10.5 7.5 L9 12 L7.5 7.5 L0 6 L7.5 4.5Z M4 3 L5 6 L4 9 L3 6Z M14 3 L15 6 L14 9 L13 6Z" fill="#eee"/></svg><div class="led" style="left:85px;top:25px"></div></div>

<div class="hd" style="top:266px;height:18px;left:192px;width:101px;background:#857a4c;border-radius:0"><div class="nm" style="top:2px;font-size:12px">kHs F..utoff</div>
<svg class="a" style="left:62px;top:3px" width="11" height="11"><circle cx="2" cy="9" r="1.7" fill="none" stroke="#eee"/><circle cx="9" cy="2" r="1.7" fill="none" stroke="#eee"/><line x1="3.2" y1="7.8" x2="7.8" y2="3.2" stroke="#eee"/></svg>
<svg class="a" style="left:86px;top:3px" width="9" height="12"><path d="M1.5 6 V3.5 A3 3 0 0 1 7.5 3.5" fill="none" stroke="#8cd030" stroke-width="1.4"/><rect x="0" y="6" width="9" height="6" fill="#8cd030"/></svg></div>

<div class="hd" style="top:284px;height:42px;left:192px;width:101px;background:#48525a;border-radius:0"><div class="nm" style="top:3px">BREAK BASS</div><div class="dots" style="left:4px">...</div>
<div class="t" style="left:64px;top:20px;font-size:15px">♪</div><div class="led" style="left:85px;top:26px"></div></div>

<div class="hd" style="top:326px;height:17px;left:192px;width:101px;background:#8b4a63;border-radius:0 0 6px 0"><div class="nm" style="top:1px;font-size:12px">Bala..lume</div>
<svg class="a" style="left:62px;top:3px" width="11" height="11"><circle cx="2" cy="9" r="1.7" fill="none" stroke="#eee"/><circle cx="9" cy="2" r="1.7" fill="none" stroke="#eee"/><line x1="3.2" y1="7.8" x2="7.8" y2="3.2" stroke="#eee"/></svg>
<svg class="a" style="left:86px;top:3px" width="9" height="12"><path d="M1.5 6 V3.5 A3 3 0 0 1 7.5 3.5" fill="none" stroke="#8cd030" stroke-width="1.4"/><rect x="0" y="6" width="9" height="6" fill="#8cd030"/></svg></div>

<div class="hd" style="top:343px;height:42px;background:#6e5650;border-radius:6px 6px 6px 0"><div class="nm" style="top:2px">ES_Drums_Loops..</div><div class="dots">...</div>
<svg class="wv" style="top:24px;left:68px" viewBox="0 0 18 12"><path d="M9 0 L10.5 4.5 L18 6 L10.5 7.5 L9 12 L7.5 7.5 L0 6 L7.5 4.5Z M4 3 L5 6 L4 9 L3 6Z M14 3 L15 6 L14 9 L13 6Z" fill="#eee"/></svg><div class="led" style="top:25px"></div></div>

<div class="hd" style="top:385px;height:43px;background:#5e5470;border-radius:6px 6px 0 6px"><div class="nm" style="top:1px">Oversampled SC ri..</div><div class="dots">...</div>
<svg class="wv" style="top:24px" viewBox="0 0 18 12"><path d="M9 0 L10.5 4.5 L18 6 L10.5 7.5 L9 12 L7.5 7.5 L0 6 L7.5 4.5Z M4 3 L5 6 L4 9 L3 6Z M14 3 L15 6 L14 9 L13 6Z" fill="#eee"/></svg><div class="tri" style="top:28px"></div><div class="led" style="top:25px"></div></div>
<div class="a" style="left:192px;top:428px;width:101px;height:15px;background:linear-gradient(#5e6a50 0 33%,#4f5e58 33% 66%,#5e6a58 66%)"></div>

<div class="hd" style="top:443px;height:42px;background:#525a68;border-radius:6px 6px 0 6px"><div class="nm" style="top:2px">OS_HARD_Kick_Kl..</div><div class="dots">...</div>
<svg class="wv" style="top:24px" viewBox="0 0 18 12"><path d="M9 0 L10.5 4.5 L18 6 L10.5 7.5 L9 12 L7.5 7.5 L0 6 L7.5 4.5Z M4 3 L5 6 L4 9 L3 6Z M14 3 L15 6 L14 9 L13 6Z" fill="#eee"/></svg><div class="tri" style="top:28px"></div><div class="led" style="top:25px"></div></div>
<div class="a" style="left:192px;top:485px;width:101px;height:55px;background:linear-gradient(#6a5e50 0 10%,#556268 10% 20%,#5e6a50 20% 30%,#6a5068 30% 40%,#525a78 40% 50%,#6a5660 50% 60%,#6a5e50 60% 70%,#5e6a50 70% 80%,#6a5068 80% 90%,#5a6a58 90%);border-radius:0 0 6px 0"></div>

<div class="hd" style="top:540px;height:42px;background:#48525a;border-radius:6px 6px 0 6px"><div class="nm" style="top:2px">DROP BASS 01</div><div class="dots">...</div>
<div class="t" style="left:50px;top:19px;font-size:15px">♪</div><div class="tri" style="top:28px"></div><div class="led" style="top:25px"></div></div>
<div class="a" style="left:192px;top:582px;width:101px;height:8px;background:#6a5068;border-radius:0 0 6px 0"></div>

<div class="hd" style="top:590px;height:42px;background:#5a6b53;border-radius:6px 6px 0 6px"><div class="nm" style="top:2px">SC_DS_strings_rif..</div><div class="dots">...</div>
<svg class="wv" style="top:24px" viewBox="0 0 18 12"><path d="M9 0 L10.5 4.5 L18 6 L10.5 7.5 L9 12 L7.5 7.5 L0 6 L7.5 4.5Z M4 3 L5 6 L4 9 L3 6Z M14 3 L15 6 L14 9 L13 6Z" fill="#eee"/></svg><div class="tri" style="top:28px"></div><div class="led" style="top:25px"></div></div>
<div class="a" style="left:192px;top:632px;width:101px;height:28px;background:linear-gradient(#5c5470 0 15%,#6a5e52 15% 85%,#4e5888 85%);border-radius:0 0 6px 0"></div>

<div class="hd" style="top:660px;height:42px;background:#5a6b53;border-radius:6px 6px 0 6px"><div class="nm" style="top:2px">SOULSURPLUS_ce..</div><div class="dots">...</div>
<svg class="wv" style="top:24px" viewBox="0 0 18 12"><path d="M9 0 L10.5 4.5 L18 6 L10.5 7.5 L9 12 L7.5 7.5 L0 6 L7.5 4.5Z M4 3 L5 6 L4 9 L3 6Z M14 3 L15 6 L14 9 L13 6Z" fill="#eee"/></svg><div class="tri" style="top:28px"></div><div class="led" style="top:25px"></div></div>
<div class="a" style="left:192px;top:702px;width:101px;height:10px;background:linear-gradient(#6a4a6a 0 50%,#5e7a50 50%);border-radius:0 0 6px 0"></div>

<div class="hd" style="top:712px;height:43px;background:#5a5e72;border-radius:6px 6px 6px 0"><div class="nm" style="top:2px">RDTH_Synth_Hit_..</div><div class="dots">...</div>
<svg class="wv" style="top:24px;left:68px" viewBox="0 0 18 12"><path d="M9 0 L10.5 4.5 L18 6 L10.5 7.5 L9 12 L7.5 7.5 L0 6 L7.5 4.5Z M4 3 L5 6 L4 9 L3 6Z M14 3 L15 6 L14 9 L13 6Z" fill="#eee"/></svg><div class="led" style="top:26px"></div></div>

<div class="hd" style="top:755px;height:34px;background:#454e56;border-radius:6px 6px 0 0"><div class="nm" style="top:2px;color:#7c868c">Track 53</div><div class="led" style="top:26px"></div></div>

</div></body></html>
